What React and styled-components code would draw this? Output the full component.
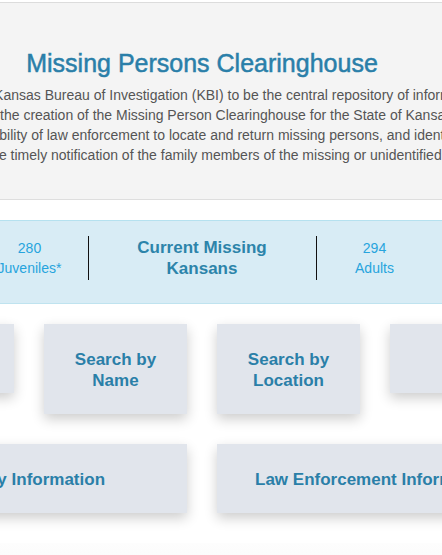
import React from "react";
import styled, { createGlobalStyle } from "styled-components";

const GlobalStyle = createGlobalStyle`
  html, body {
    margin: 0;
    padding: 0;
    background: #fff;
    overflow: hidden;
  }
  body {
    font-family: "Liberation Sans", Arial, Helvetica, sans-serif;
  }
`;

const INTRO = [
  "In 1997 the Legislature designated the Kansas Bureau of Investigation (KBI) to be the central repository of information regarding missing persons.",
  "This mandate led to the creation of the Missing Person Clearinghouse for the State of Kansas, whose goal",
  "enhance the ability of law enforcement to locate and return missing persons, and identify them",
  "and facilitate the timely notification of the family members of the missing or unidentified persons.",
];

const SEARCHES = ["View All", "Search by Name", "Search by Location", "FAQ"];

const LINKS = ["Family Information", "Law Enforcement Information"];

const App = () => {
  return (
    <>
      <GlobalStyle />
      <Viewport>
        <Stage>
          <Hero>
            <Title>Missing Persons Clearinghouse</Title>
            <Intro>
              {INTRO.map((line) => (
                <IntroLine key={line}>{line}</IntroLine>
              ))}
            </Intro>
          </Hero>

          <StatsBar>
            <Stat>
              <span>280</span>
              <span>Juveniles*</span>
            </Stat>
            <Divider />
            <StatsTitle>
              Current Missing
              <br />
              Kansans
            </StatsTitle>
            <Divider />
            <Stat>
              <span>294</span>
              <span>Adults</span>
            </Stat>
          </StatsBar>

          <Cards>
            <CardRow $cols={4}>
              {SEARCHES.map((label) => (
                <Card key={label}>{label}</Card>
              ))}
            </CardRow>
            <CardRow $cols={2}>
              {LINKS.map((label) => (
                <Card key={label}>{label}</Card>
              ))}
            </CardRow>
          </Cards>

          <Footer />
        </Stage>
      </Viewport>
    </>
  );
};

export default App;

const Viewport = styled.div`
  width: 442px;
  height: 555px;
  overflow: hidden;
`;

const Stage = styled.div`
  width: 900px;
  margin-left: -248px;
  padding-top: 2px;
`;

const Hero = styled.section`
  background: #f4f4f4;
  border-top: 1px solid #dcdcdc;
  border-bottom: 1px solid #dedede;
  height: 198px;
  box-sizing: border-box;
  padding-top: 45px;
  text-align: center;
`;

const Title = styled.h1`
  margin: 0 0 7px;
  font-size: 25px;
  line-height: 30px;
  font-weight: 400;
  color: #2a7fa9;
  -webkit-text-stroke: 0.5px #2a7fa9;
`;

const Intro = styled.div`
  font-size: 14px;
  line-height: 20px;
  color: #555;
`;

const IntroLine = styled.div`
  white-space: nowrap;
`;

const StatsBar = styled.section`
  margin-top: 20px;
  height: 84px;
  box-sizing: border-box;
  background: #d8ecf5;
  border-top: 1px solid #b5e1ef;
  border-bottom: 1px solid #bfe3ef;
  display: flex;
  justify-content: center;
  align-items: flex-start;
  padding-top: 15px;
`;

const Stat = styled.div`
  width: 116px;
  display: flex;
  flex-direction: column;
  align-items: center;
  font-size: 14px;
  line-height: 20px;
  color: #27a4dd;
  padding-top: 2px;
`;

const Divider = styled.div`
  width: 1px;
  height: 44px;
  background: #111;
`;

const StatsTitle = styled.div`
  width: 227px;
  padding-top: 1px;
  text-align: center;
  font-size: 17px;
  line-height: 21px;
  font-weight: 700;
  color: #2c84aa;
`;

const Cards = styled.div`
  width: 662px;
  margin: 20px auto 0;
  display: flex;
  flex-direction: column;
  gap: 30px;
`;

const CardRow = styled.div`
  display: grid;
  grid-template-columns: repeat(${(p) => p.$cols}, 1fr);
  column-gap: 30px;
  align-items: start;
`;

const Card = styled.div`
  padding: 25px 20px 23px;
  background: #e1e5ec;
  box-shadow: 0 5px 12px rgba(0, 0, 0, 0.2);
  text-align: center;
  font-size: 17px;
  line-height: 21px;
  font-weight: 700;
  color: #2a7fa8;
`;

const Footer = styled.div`
  margin-top: 30px;
  height: 60px;
  background: linear-gradient(#fdfdfd, #f6f6f6);
`;
